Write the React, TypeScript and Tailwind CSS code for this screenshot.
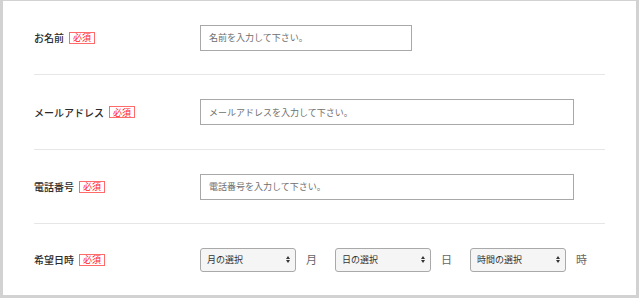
import type { ReactNode } from 'react';

const FONT = { fontFamily: '"Noto Sans CJK JP", "Noto Sans", sans-serif' };

function Required() {
  return (
    <span className="ml-[5px] inline-flex h-[12px] w-[26px] items-center justify-center border border-[#ff6a6a] text-[9px] leading-none text-[#ff2020]">
      必須
    </span>
  );
}

interface RowProps {
  label: string;
  height: string;
  last?: boolean;
  children: ReactNode;
}

function Row({ label, height, last, children }: RowProps) {
  const line = last ? '' : 'border-b border-[#e6e6e6]';
  return (
    <div className={`flex ${height}`}>
      <div className={`flex w-[150px] shrink-0 items-center ${line}`}>
        <span className="text-[10px] font-medium text-[#2a2a2a]">{label}</span>
        <Required />
      </div>
      <div className={`flex flex-1 items-center pl-[16px] ${line}`}>{children}</div>
    </div>
  );
}

function TextInput({ placeholder, width }: { placeholder: string; width: string }) {
  return (
    <input
      type="text"
      placeholder={placeholder}
      className={`h-[26px] ${width} border border-[#a8a8a8] bg-white px-[8px] text-[9px] text-[#333] outline-none placeholder:text-[#6f6f6f]`}
    />
  );
}

// 見た目だけのセレクト（ネイティブ select は文字が下にずれるため）
function Select({ label }: { label: string }) {
  return (
    <div className="flex h-[24px] w-[96px] items-center justify-between rounded-[3px] border border-[#a9a9a9] bg-[#f5f5f5] pl-[6px] pr-[5px]">
      <span className="text-[9px] leading-none text-[#333]">{label}</span>
      <svg width="4" height="7" viewBox="0 0 4 7">
        <path d="M0 3L2 0L4 3Z" fill="#333" />
        <path d="M0 4L2 7L4 4Z" fill="#333" />
      </svg>
    </div>
  );
}

function Unit({ children, last }: { children: ReactNode; last?: boolean }) {
  return (
    <span className={`ml-[10px] text-[11px] text-[#666] ${last ? '' : 'mr-[18px]'}`}>
      {children}
    </span>
  );
}

export default function App() {
  return (
    <div className="h-[298px] w-[640px] bg-white" style={FONT}>
      <div className="h-[298px] w-[639px] border-b-[3px] border-l-[3px] border-r-[3px] border-t border-[#d2d2d2] px-[31px]">
        <Row label="お名前" height="h-[74px]">
          <TextInput placeholder="名前を入力して下さい。" width="w-[212px]" />
        </Row>
        <Row label="メールアドレス" height="h-[75px]">
          <TextInput placeholder="メールアドレスを入力して下さい。" width="w-[374px]" />
        </Row>
        <Row label="電話番号" height="h-[74px]">
          <TextInput placeholder="電話番号を入力して下さい。" width="w-[374px]" />
        </Row>
        <Row label="希望日時" height="h-[71px]" last>
          <Select label="月の選択" />
          <Unit>月</Unit>
          <Select label="日の選択" />
          <Unit>日</Unit>
          <Select label="時間の選択" />
          <Unit last>時</Unit>
        </Row>
      </div>
    </div>
  );
}
